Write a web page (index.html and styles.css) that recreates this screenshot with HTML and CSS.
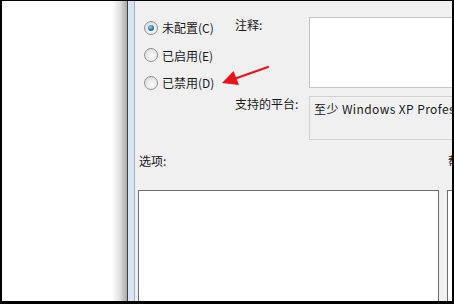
FILE: index.html
```html
<!DOCTYPE html>
<html lang="zh-CN">
<head>
    <meta charset="UTF-8">
    <title>组策略设置</title>
    <link rel="stylesheet" href="styles.css">
</head>
<body>
    <div class="screen">
        <div class="desk"></div>
        <div class="frame"></div>
        <div class="dialog">
            <div class="top">
                <div class="radios">
                    <label class="radio"><span class="dot checked"></span>未配置(C)</label>
                    <label class="radio"><span class="dot"></span>已启用(E)</label>
                    <label class="radio"><span class="dot"></span>已禁用(D)</label>
                </div>
                <div class="fields">
                    <div class="field-label">注释:</div>
                    <div class="textbox"></div>
                    <div class="field-label">支持的平台:</div>
                    <div class="readonly">至少 Windows XP Professional</div>
                </div>
            </div>
            <div class="opt-row">
                <div>选项:</div>
                <div class="help-label">帮助:</div>
            </div>
            <div class="boxes">
                <div class="box"></div>
                <div class="box"></div>
            </div>
        </div>

        <!-- red annotation arrow -->
        <svg class="arrow" viewBox="0 0 454 304" width="454" height="304">
            <line x1="268" y1="67" x2="234" y2="79" stroke="#e8141b" stroke-width="2.2" stroke-linecap="round"/>
            <polygon points="222,83 233.5,71 239,85" fill="#e8141b"/>
        </svg>
    </div>
</body>
</html>
```

FILE: styles.css
```css
body {
    margin: 0;
    background-color: #000;
    font-family: "Noto Sans CJK SC", "Liberation Sans", sans-serif;
    font-size: 12px;
    color: #1a1a1a;
}
.screen {
    position: relative;
    width: 454px;
    height: 304px;
    box-sizing: border-box;
    border-style: solid;
    border-color: #000;
    border-width: 1px 2px 3px 2px;
    display: flex;
    overflow: hidden;
}
.desk {
    width: 125px;
    flex-shrink: 0;
    background: linear-gradient(to right, #fff 0, #fff 88%, #e2e2e2 94%, #a8a8a8 100%);
}
.frame {
    width: 6px;
    flex-shrink: 0;
    background-color: #d8e5f3;
    border-left: 1px solid #3f3f3f;
    border-right: 1px solid #a3b0be;
}
.dialog {
    flex: 1;
    background-color: #f0f0f0;
    overflow: hidden;
    padding-left: 3px;
}
.top {
    display: flex;
    height: 151px;
}
.radios {
    width: 97px;
    padding-top: 13px;
    padding-left: 6px;
    box-sizing: border-box;
    flex-shrink: 0;
}
.radio {
    display: flex;
    align-items: center;
    gap: 4px;
    height: 27.5px;
    white-space: nowrap;
}
.dot {
    width: 12px;
    height: 12px;
    border-radius: 50%;
    border: 1px solid #8f9293;
    background: radial-gradient(circle at 60% 65%, #fbfbfb 0, #e8e8e8 55%, #c9c9c9 100%);
    display: flex;
    align-items: center;
    justify-content: center;
}
.dot.checked::after {
    content: "";
    width: 6px;
    height: 6px;
    border-radius: 50%;
    background: radial-gradient(circle at 40% 35%, #8fd3f5 0, #2c7fb8 50%, #123f66 100%);
}
.fields {
    display: grid;
    grid-template-columns: 74px 220px;
    grid-template-rows: 71px 44px;
    row-gap: 8px;
    padding-top: 16px;
}
.field-label {
    line-height: 16px;
    white-space: nowrap;
}
.textbox {
    background-color: #fff;
    border: 1px solid #c5c5c5;
}
.readonly {
    background-color: #f0f0f0;
    border: 1px solid #d0d0d0;
    padding: 4px 0 0 4px;
    line-height: 16px;
    letter-spacing: 0.4px;
    white-space: nowrap;
    overflow: hidden;
}
.opt-row {
    display: grid;
    grid-template-columns: 309px 40px;
    line-height: 16px;
    margin-top: 1px;
    padding-left: 1px;
}
.help-label {
    white-space: nowrap;
}
.boxes {
    display: grid;
    grid-template-columns: 301px 40px;
    column-gap: 8px;
    margin-top: 21px;
}
.box {
    height: 130px;
    background-color: #fff;
    border: 1px solid #6e6e6e;
}
.arrow {
    position: absolute;
    left: -2px;
    top: -1px;
    pointer-events: none;
}
```
